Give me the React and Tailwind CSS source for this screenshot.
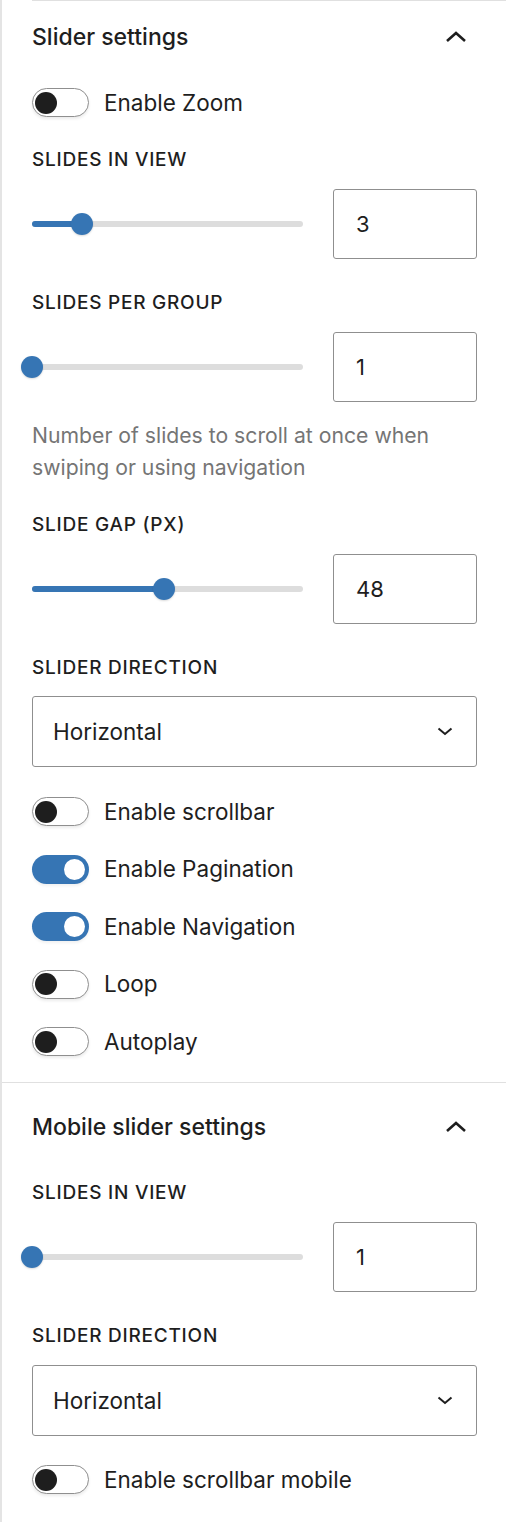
import { useState } from "react";

function Chevron({ up }) {
    return up ? (
        <svg width="22" height="12" viewBox="0 0 22 12" fill="none">
            <path d="M2 10 L11 2 L20 10" stroke="#1e1e1e" strokeWidth="2.6" />
        </svg>
    ) : (
        <svg width="16" height="9" viewBox="0 0 16 9" fill="none">
            <path d="M1.5 1.5 L8 7 L14.5 1.5" stroke="#1e1e1e" strokeWidth="2" />
        </svg>
    );
}

function Toggle({ label, on }) {
    return (
        <div className="flex h-[29px] items-center gap-[15px]">
            {on ? (
                <div className="flex h-[29px] w-[57px] items-center justify-end rounded-full bg-[#3675b4] pr-[4px] shadow-[0_2px_3px_rgba(0,0,0,0.06)]">
                    <div className="h-[21px] w-[21px] rounded-full bg-white" />
                </div>
            ) : (
                <div className="flex h-[29px] w-[57px] items-center rounded-full border border-[#8f8f8f] bg-white pl-[2px] shadow-[0_2px_3px_rgba(0,0,0,0.08)]">
                    <div className="h-[22px] w-[22px] rounded-full bg-[#1e1e1e]" />
                </div>
            )}
            <span className="text-[22.5px] text-[#1e1e1e]">{label}</span>
        </div>
    );
}

function Label({ children, className }) {
    return (
        <div className={"h-[24px] text-[19px] leading-[24px] font-medium uppercase tracking-[0.04em] text-[#1e1e1e] " + (className || "")}>
            {children}
        </div>
    );
}

function Range({ value, pos }) {
    return (
        <div className="mt-[17px] flex h-[70px] items-center">
            <div className="relative h-[6px] w-[271px] rounded-full bg-[#dddddd]">
                <div className="h-[6px] rounded-full bg-[#3675b4]" style={{ width: pos + "px" }} />
                <div
                    className="absolute top-[-8px] h-[22px] w-[22px] rounded-full bg-[#3675b4] shadow-[0_1px_2px_rgba(0,0,0,0.15)]"
                    style={{ left: pos - 11 + "px" }}
                />
            </div>
            <div className="ml-[30px] flex h-[70px] w-[144px] items-center rounded-[3px] border border-[#8f8f8f] px-[22px] text-[22px] text-[#1e1e1e]">
                {value}
            </div>
        </div>
    );
}

function Select({ value, className }) {
    return (
        <div className={"flex h-[71px] w-[445px] items-center justify-between rounded-[3px] border border-[#8f8f8f] pl-[20px] pr-[23px] text-[22.5px] text-[#1e1e1e] " + (className || "")}>
            <span>{value}</span>
            <Chevron />
        </div>
    );
}

function Header({ title, className }) {
    return (
        <div className={"flex items-center justify-between pr-[39px] " + (className || "")}>
            <h2 className="text-[23px] font-medium text-[#1e1e1e]">{title}</h2>
            <Chevron up />
        </div>
    );
}

export default function App() {
    const [open] = useState(true);

    return (
        <div className="min-h-[1522px] w-[506px] border-l-2 border-[#e4e4e4] bg-white pl-[30px] font-['Inter','Liberation_Sans',sans-serif]">
            <div className="border-t border-[#e0e0e0] pb-[26px]">
                <Header title="Slider settings" className="h-[72px]" />
                {open && (
                    <div className="flex flex-col">
                        <div className="mt-[15px]">
                            <Toggle label="Enable Zoom" />
                        </div>
                        <Label className="mt-[31px]">Slides in view</Label>
                        <Range value="3" pos={50} />
                        <Label className="mt-[32px]">Slides per group</Label>
                        <Range value="1" pos={0} />
                        <p className="mt-[17px] w-[440px] text-[21.2px] leading-[32px] text-[#757575]">
                            Number of slides to scroll at once when swiping or using navigation
                        </p>
                        <Label className="mt-[30px]">Slide gap (px)</Label>
                        <Range value="48" pos={132} />
                        <Label className="mt-[32px]">Slider direction</Label>
                        <Select value="Horizontal" className="mt-[16px]" />
                        <div className="mt-[30px] flex flex-col gap-[28.6px]">
                            <Toggle label="Enable scrollbar" />
                            <Toggle label="Enable Pagination" on />
                            <Toggle label="Enable Navigation" on />
                            <Toggle label="Loop" />
                            <Toggle label="Autoplay" />
                        </div>
                    </div>
                )}
            </div>
            <div className="-ml-[30px] border-t border-[#e0e0e0] pb-[28px] pl-[30px]">
                <Header title="Mobile slider settings" className="h-[88px]" />
                <div className="flex flex-col">
                    <Label className="mt-[10px]">Slides in view</Label>
                    <Range value="1" pos={0} />
                    <Label className="mt-[32px]">Slider direction</Label>
                    <Select value="Horizontal" className="mt-[17px]" />
                    <div className="mt-[29px]">
                        <Toggle label="Enable scrollbar mobile" />
                    </div>
                </div>
            </div>
            <div className="-ml-[30px] border-t border-[#e0e0e0]" />
        </div>
    );
}
